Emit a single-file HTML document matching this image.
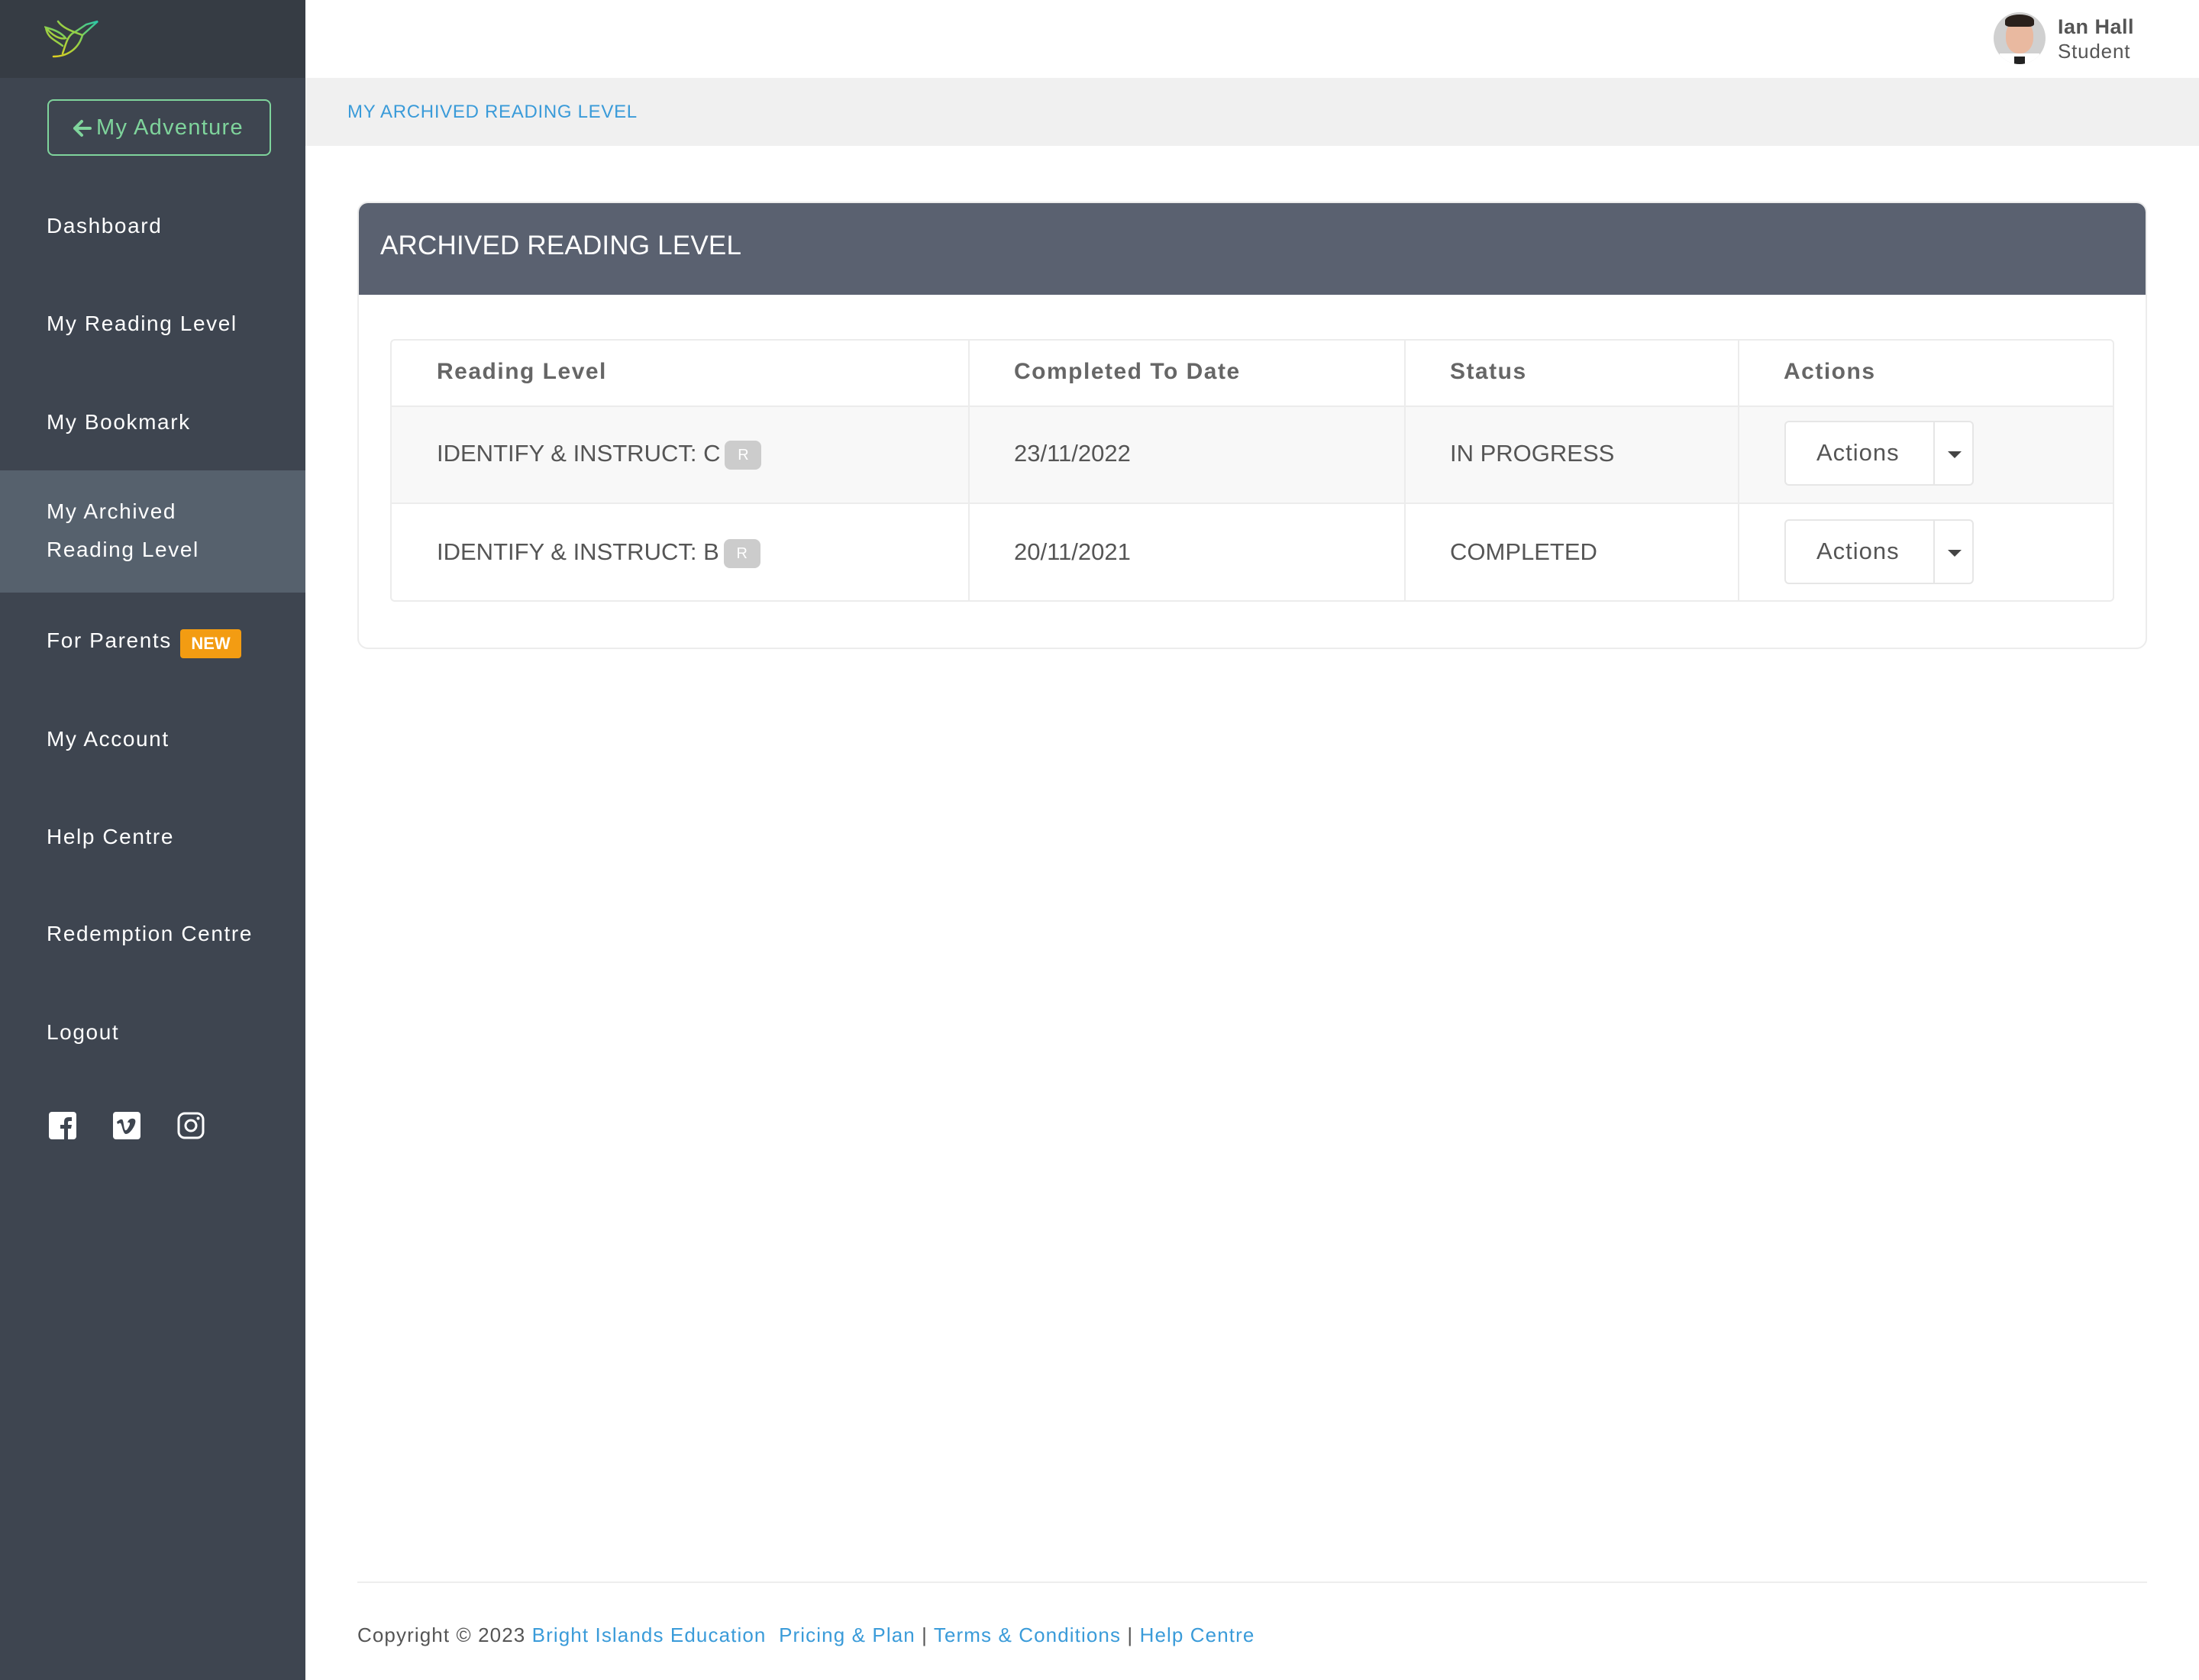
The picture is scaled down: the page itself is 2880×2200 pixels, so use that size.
<!DOCTYPE html>
<html><head><meta charset="utf-8"><style>
*{margin:0;padding:0;box-sizing:border-box}
body{width:2880px;height:2200px;position:relative;background:#fff;font-family:"Liberation Sans",sans-serif;overflow:hidden}
.a{position:absolute;white-space:nowrap}
.side{position:absolute;left:0;top:0;width:400px;height:2200px;background:#3e4550}
.nav{position:absolute;left:61px;color:#fff;font-size:28px;line-height:34px;letter-spacing:1.6px;white-space:nowrap}
.th{position:absolute;top:444px;height:85px;line-height:85px;font-size:30px;font-weight:bold;color:#666;letter-spacing:1.5px}
.td{position:absolute;font-size:31px;color:#555;line-height:40px;white-space:nowrap}
.btn{position:absolute;left:2337px;width:248px;height:85px;border:2px solid #e6e6e6;border-radius:6px;background:#fff}
.btn span{position:absolute;left:40px;top:22px;font-size:31px;color:#555;letter-spacing:1px}
.btn i{position:absolute;left:193px;top:0;bottom:0;border-left:2px solid #e6e6e6}
.btn b{position:absolute;left:212px;top:38px;border-left:9px solid transparent;border-right:9px solid transparent;border-top:9px solid #444}
.rb{display:inline-block;width:48px;height:38px;border-radius:8px;background:#ccc;color:#fff;font-size:20px;text-align:center;line-height:38px;vertical-align:middle;margin-left:6px}
</style></head><body>
<div class="side"></div>
<div class="a" style="left:0;top:0;width:400px;height:102px;background:#363c44"></div>
<svg class="a" style="left:58px;top:24px" width="76" height="56" viewBox="0 0 76 56"><defs><linearGradient id="g" x1="0" y1="1" x2="1" y2="0"><stop offset="0" stop-color="#e0cf20"/><stop offset=".5" stop-color="#8fd04a"/><stop offset="1" stop-color="#2ac6a8"/></linearGradient></defs><g fill="none" stroke="url(#g)" stroke-width="2.5" stroke-linecap="round"><path d="M12 50C30 50 45 40 50 22L70 4L55 8L40 18C30 22 28 35 24 46"/><path d="M18 4C25 14 40 18 50 22"/><path d="M2 12C10 14 22 18 28 26C20 28 10 22 2 12Z"/><path d="M2 12C4 26 14 28 24 36"/></g></svg>
<div class="a" style="left:62px;top:130px;width:293px;height:74px;border:2px solid #7fd49c;border-radius:8px"></div>
<svg class="a" style="left:94px;top:156px" width="26" height="24" viewBox="0 0 26 24"><path d="M13 3L4 12L13 21M4 12H24" fill="none" stroke="#7fd49c" stroke-width="4" stroke-linecap="round" stroke-linejoin="round"/></svg>
<div class="a" style="left:126px;top:151px;font-size:29px;color:#7fd49c;letter-spacing:1.3px">My Adventure</div>
<div class="nav" style="top:279px">Dashboard</div>
<div class="nav" style="top:407px">My Reading Level</div>
<div class="nav" style="top:536px">My Bookmark</div>
<div class="a" style="left:0;top:616px;width:400px;height:160px;background:#56616d"></div>
<div class="nav" style="top:653px">My Archived</div>
<div class="nav" style="top:703px">Reading Level</div>
<div class="nav" style="top:822px">For Parents</div>
<div class="a" style="left:236px;top:824px;width:80px;height:38px;background:#f39c12;border-radius:4px;color:#fff;font-weight:bold;font-size:22px;text-align:center;line-height:38px">NEW</div>
<div class="nav" style="top:951px">My Account</div>
<div class="nav" style="top:1079px">Help Centre</div>
<div class="nav" style="top:1206px">Redemption Centre</div>
<div class="nav" style="top:1335px">Logout</div>
<svg class="a" style="left:64px;top:1456px" width="36" height="36" viewBox="0 0 36 36"><rect width="36" height="36" rx="4" fill="#fff"/><path d="M20 36V22h-5v-5h5v-4c0-4 2-6 6-6h4v5h-3c-1.5 0-2 .7-2 2v3h5l-1 5h-4v14z" fill="#3e4550"/></svg>
<svg class="a" style="left:148px;top:1456px" width="36" height="36" viewBox="0 0 36 36"><rect width="36" height="36" rx="4" fill="#fff"/><path d="M5 13c3-2 5-4 7-3 2 1 2 12 4 14 1 1 3-1 5-5 2-4 1-6-2-5 1-4 5-6 8-5 3 1 3 4 1 9-3 6-7 11-11 11-4 0-5-12-7-14-1-1-2 0-4 1z" fill="#3e4550"/></svg>
<svg class="a" style="left:232px;top:1456px" width="36" height="36" viewBox="0 0 36 36"><rect x="2" y="2" width="32" height="32" rx="8" fill="none" stroke="#fff" stroke-width="3"/><circle cx="18" cy="18" r="7" fill="none" stroke="#fff" stroke-width="3"/><circle cx="27.5" cy="8.5" r="2" fill="#fff"/></svg>

<div class="a" style="left:400px;top:102px;width:2480px;height:89px;background:#f0f0f0"></div>
<div class="a" style="left:455px;top:133px;font-size:24px;color:#3a9bd9;letter-spacing:0.7px">MY ARCHIVED READING LEVEL</div>
<div class="a" style="left:2611px;top:16px;width:68px;height:68px;border-radius:50%;background:#d0d0d0;overflow:hidden"><div style="position:absolute;left:16px;top:10px;width:36px;height:44px;border-radius:45%;background:#e9b9a0"></div><div style="position:absolute;left:15px;top:3px;width:38px;height:16px;border-radius:50% 50% 20% 20%;background:#2a211c"></div><div style="position:absolute;left:8px;top:54px;width:52px;height:16px;background:#fff"></div><div style="position:absolute;left:27px;top:58px;width:14px;height:10px;background:#222"></div></div>
<div class="a" style="left:2695px;top:20px;font-size:27px;font-weight:bold;color:#555;letter-spacing:0.5px">Ian Hall</div>
<div class="a" style="left:2695px;top:52px;font-size:26px;color:#555;letter-spacing:0.8px">Student</div>

<div class="a" style="left:468px;top:264px;width:2344px;height:586px;border:2px solid #ececec;border-radius:14px;overflow:hidden">
<div style="height:120px;background:#5a6170"></div></div>
<div class="a" style="left:498px;top:302px;font-size:35px;color:#fff;letter-spacing:0.2px">ARCHIVED READING LEVEL</div>

<div class="a" style="left:511px;top:444px;width:2258px;height:344px;border:2px solid #ececec;border-radius:6px;overflow:hidden">
<div style="position:absolute;left:0;top:85px;width:100%;height:129px;background:#f8f8f8;border-top:2px solid #ececec;border-bottom:2px solid #ececec"></div>
<div style="position:absolute;left:755px;top:0;bottom:0;border-left:2px solid #ececec"></div>
<div style="position:absolute;left:1326px;top:0;bottom:0;border-left:2px solid #ececec"></div>
<div style="position:absolute;left:1763px;top:0;bottom:0;border-left:2px solid #ececec"></div>
</div>
<div class="th" style="left:572px">Reading Level</div>
<div class="th" style="left:1328px">Completed To Date</div>
<div class="th" style="left:1899px">Status</div>
<div class="th" style="left:2336px">Actions</div>
<div class="td" style="left:572px;top:574px">IDENTIFY &amp; INSTRUCT: C<span class="rb">R</span></div>
<div class="td" style="left:1328px;top:574px">23/11/2022</div>
<div class="td" style="left:1899px;top:574px">IN PROGRESS</div>
<div class="btn" style="top:551px"><span>Actions</span><i></i><b></b></div>
<div class="td" style="left:572px;top:703px">IDENTIFY &amp; INSTRUCT: B<span class="rb">R</span></div>
<div class="td" style="left:1328px;top:703px">20/11/2021</div>
<div class="td" style="left:1899px;top:703px">COMPLETED</div>
<div class="btn" style="top:680px"><span>Actions</span><i></i><b></b></div>

<div class="a" style="left:468px;top:2071px;width:2344px;border-top:2px solid #eee"></div>
<div class="a" style="left:468px;top:2126px;font-size:26px;color:#555;letter-spacing:1.1px">Copyright © 2023 <span style="color:#3a9bd9">Bright Islands Education</span>&nbsp; <span style="color:#3a9bd9">Pricing &amp; Plan</span> | <span style="color:#3a9bd9">Terms &amp; Conditions</span> | <span style="color:#3a9bd9">Help Centre</span></div>
</body></html>
